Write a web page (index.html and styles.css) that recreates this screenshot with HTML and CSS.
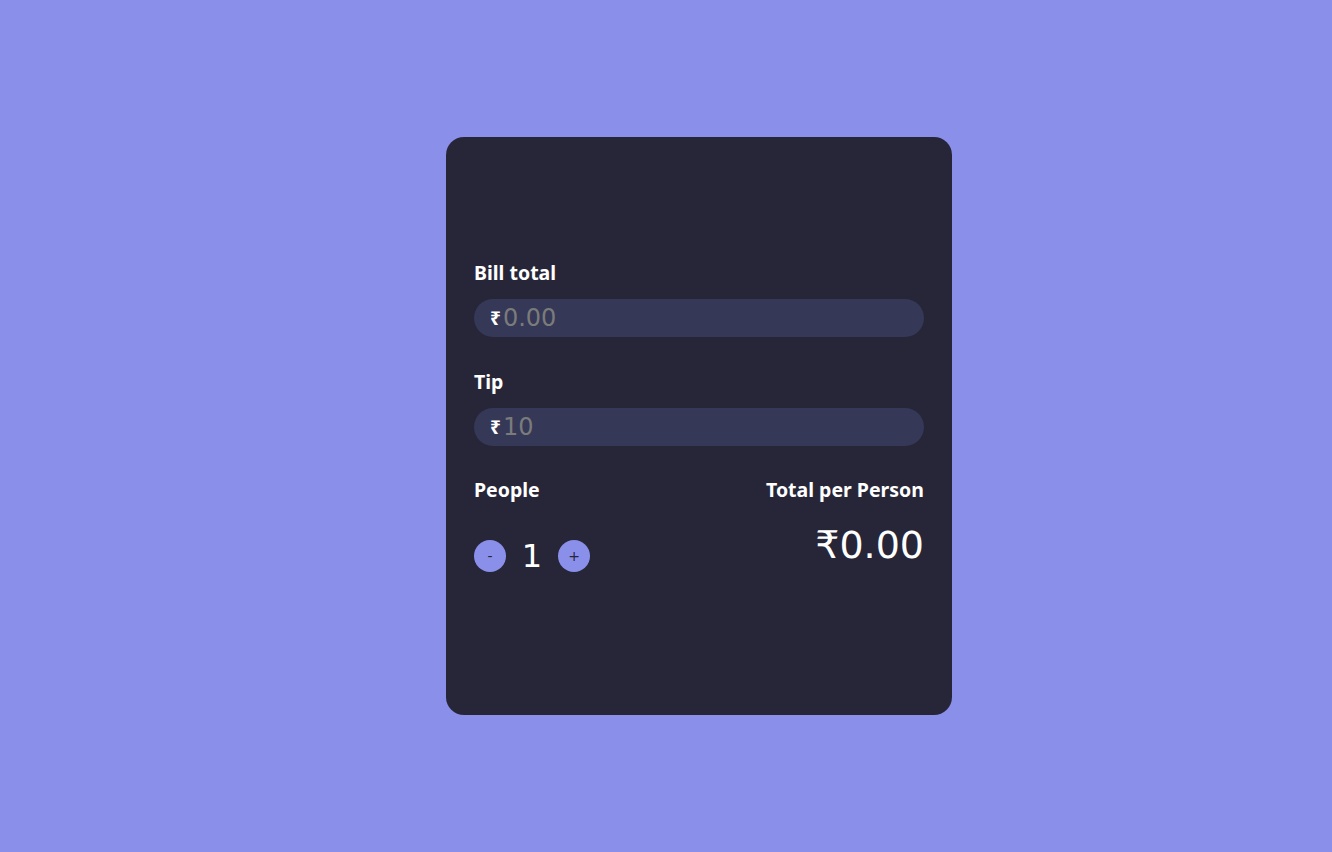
FILE: index.html
```html
<!DOCTYPE html>
<html>
<head>
<meta charset="utf-8">
<link rel="stylesheet" href="styles.css">
</head>
<body>
<main class="page">
  <section class="card">
    <label class="label">Bill total</label>
    <div class="field"><span class="cur">₹</span><span class="ph">0.00</span></div>
    <label class="label tip-label">Tip</label>
    <div class="field"><span class="cur">₹</span><span class="ph">10</span></div>
    <div class="bottom">
      <div class="col">
        <div class="label">People</div>
        <div class="counter">
          <button class="btn">-</button>
          <span class="count">1</span>
          <button class="btn">+</button>
        </div>
      </div>
      <div class="col right">
        <div class="label">Total per Person</div>
        <div class="total">₹0.00</div>
      </div>
    </div>
  </section>
</main>
</body>
</html>
```
FILE: styles.css
```css
html, body { margin: 0; padding: 0; }
body {
  background: #8a8fea;
  font-family: "Noto Sans", "DejaVu Sans", sans-serif;
  color: #fff;
}
.page {
  height: 852px;
  display: flex;
  align-items: center;
  justify-content: center;
  padding-left: 66px;
  box-sizing: border-box;
}
.card {
  width: 506px;
  height: 578px;
  box-sizing: border-box;
  background: #272638;
  border-radius: 18px;
  padding: 124px 28px 0;
  display: flex;
  flex-direction: column;
}
.label {
  display: block;
  font-weight: 700;
  font-size: 19.5px;
  line-height: 24px;
  color: #fff;
}
.field {
  margin-top: 14px;
  height: 38px;
  border-radius: 19px;
  background: #353857;
  display: flex;
  align-items: center;
  padding-left: 16px;
}
.cur { font-size: 19px; font-weight: 700; color: #fff; margin-right: 2px; }
.ph { font-size: 24px; color: #7b7b7b; font-family: "DejaVu Sans", sans-serif; }
.tip-label { margin-top: 33px; }
.bottom {
  margin-top: 32px;
  display: flex;
  justify-content: space-between;
}
.col { display: flex; flex-direction: column; }
.right { align-items: flex-end; }
.counter {
  margin-top: 35px;
  display: flex;
  align-items: center;
}
.btn {
  width: 32px;
  height: 32px;
  border-radius: 50%;
  border: none;
  background: #8a8fea;
  color: #272638;
  font-size: 14px;
  padding: 0;
  font-family: "DejaVu Sans", sans-serif;
}
.count {
  font-size: 32px;
  width: 52px;
  text-align: center;
  font-family: "DejaVu Sans", sans-serif;
}
.total {
  margin-top: 19px;
  font-size: 38px;
  line-height: 48px;
  font-family: "DejaVu Sans", sans-serif;
}
```
